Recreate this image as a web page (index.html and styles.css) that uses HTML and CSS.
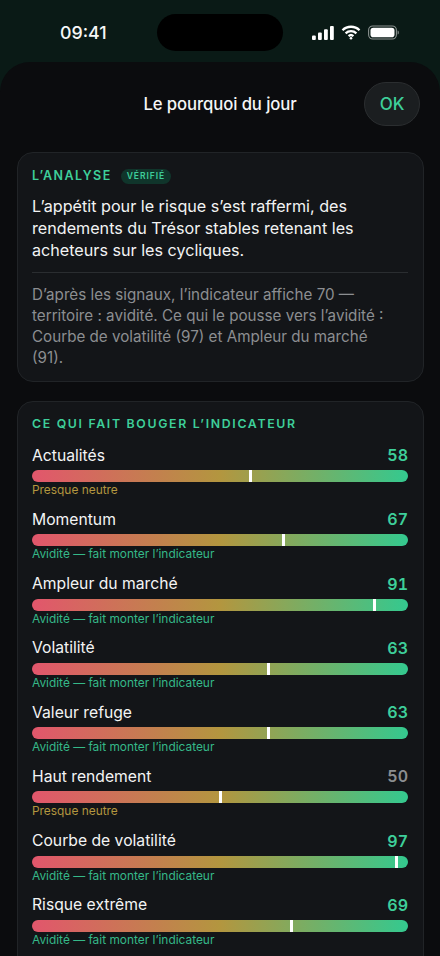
FILE: index.html
```html
<!DOCTYPE html>
<html lang="fr">
<head>
<meta charset="utf-8">
<title>Le pourquoi du jour</title>
<link rel="stylesheet" href="styles.css">
</head>
<body>
<div class="screen">
  <div class="status">
    <span class="time">09:41</span>
    <span class="island"></span>
    <span class="status-icons">
      <svg class="ic-signal" width="22" height="14" viewBox="0 0 22 14"><rect x="0" y="9.500" width="3.800" height="4.500" rx="1"/><rect x="6" y="6.500" width="3.800" height="7.500" rx="1"/><rect x="12" y="3.200" width="3.800" height="10.800" rx="1"/><rect x="18" y="0" width="3.800" height="14" rx="1"/></svg>
      <svg class="ic-wifi" width="20" height="15" viewBox="0 0 20 15"><path d="M1.500 5.200a12.200 12.200 0 0 1 17 0"/><path d="M4.600 8.300a7.800 7.800 0 0 1 10.800 0"/><path d="M7.600 11.200a3.500 3.500 0 0 1 4.800 0"/><circle cx="10" cy="13.200" r="1.300" class="dot"/></svg>
      <svg class="ic-batt" width="31" height="15" viewBox="0 0 31 15"><rect x="0.600" y="1" width="27.800" height="13" rx="4.200" class="shell"/><rect x="2.500" y="2.800" width="24" height="9.400" rx="2.800" class="fill"/><path d="M29.600 5.500c.9.300 1.200 1.100 1.200 2s-.3 1.700-1.200 2z" class="cap"/></svg>
    </span>
  </div>
  <main class="sheet">
    <header class="head">
      <h1 class="title">Le pourquoi du jour</h1>
      <button class="ok">OK</button>
    </header>
    <section class="card analysis">
      <div class="label-row">
        <h2 class="label">L’ANALYSE</h2>
        <span class="badge">VÉRIFIÉ</span>
      </div>
      <p class="lead">L’appétit pour le risque s’est raffermi, des rendements du Trésor stables retenant les acheteurs sur les cycliques.</p>
      <hr class="rule">
      <p class="detail">D’après les signaux, l’indicateur affiche 70 — territoire : avidité. Ce qui le pousse vers l’avidité : Courbe de volatilité (97) et Ampleur du marché (91).</p>
    </section>
    <section class="card drivers">
      <h2 class="label wide">CE QUI FAIT BOUGER L’INDICATEUR</h2>
      <div class="row">
        <div class="row-top"><span class="name">Actualités</span><span class="val up">58</span></div>
        <div class="bar"><i class="mark" style="left:58%"></i></div>
        <div class="note neutral">Presque neutre</div>
      </div>
      <div class="row">
        <div class="row-top"><span class="name">Momentum</span><span class="val up">67</span></div>
        <div class="bar"><i class="mark" style="left:67%"></i></div>
        <div class="note up">Avidité — fait monter l’indicateur</div>
      </div>
      <div class="row">
        <div class="row-top"><span class="name">Ampleur du marché</span><span class="val up">91</span></div>
        <div class="bar"><i class="mark" style="left:91%"></i></div>
        <div class="note up">Avidité — fait monter l’indicateur</div>
      </div>
      <div class="row">
        <div class="row-top"><span class="name">Volatilité</span><span class="val up">63</span></div>
        <div class="bar"><i class="mark" style="left:63%"></i></div>
        <div class="note up">Avidité — fait monter l’indicateur</div>
      </div>
      <div class="row">
        <div class="row-top"><span class="name">Valeur refuge</span><span class="val up">63</span></div>
        <div class="bar"><i class="mark" style="left:63%"></i></div>
        <div class="note up">Avidité — fait monter l’indicateur</div>
      </div>
      <div class="row">
        <div class="row-top"><span class="name">Haut rendement</span><span class="val flat">50</span></div>
        <div class="bar"><i class="mark" style="left:50%"></i></div>
        <div class="note neutral">Presque neutre</div>
      </div>
      <div class="row">
        <div class="row-top"><span class="name">Courbe de volatilité</span><span class="val up">97</span></div>
        <div class="bar"><i class="mark" style="left:97%"></i></div>
        <div class="note up">Avidité — fait monter l’indicateur</div>
      </div>
      <div class="row">
        <div class="row-top"><span class="name">Risque extrême</span><span class="val up">69</span></div>
        <div class="bar"><i class="mark" style="left:69%"></i></div>
        <div class="note up">Avidité — fait monter l’indicateur</div>
      </div>
    </section>
  </main>
</div>
</body>
</html>
```
FILE: styles.css
```css
* { box-sizing: border-box; }
html, body { margin: 0; padding: 0; height: 956px; overflow: hidden; background: #0a1c17; }
body { font-family: Inter, "Noto Sans", sans-serif; color: #f4f5f5; }
.screen { width: 440px; height: 956px; overflow: hidden; display: flex; flex-direction: column; background: #0a1a16; }
.status { height: 62px; flex: none; display: flex; align-items: flex-start; padding: 14px 41px 0 60px; }
.time { font-size: 17.800px; font-weight: 500; line-height: 22px; margin-top: 8px; width: 48px; color: #f6f7f7; }
.island { width: 126px; height: 37px; border-radius: 19px; background: #000; margin-left: 49px; }
.status-icons { display: flex; align-items: center; gap: 7px; height: 37px; margin-left: 29px; }
.status-icons svg { display: block; }
.ic-signal rect { fill: #fff; }
.ic-wifi path { fill: none; stroke: #fff; stroke-width: 2.300; }
.ic-wifi .dot { fill: #fff; }
.ic-batt .shell { fill: none; stroke: #8b9290; stroke-width: 1.100; }
.ic-batt .fill { fill: #fff; }
.ic-batt .cap { fill: #8b9290; }
.sheet { flex: 1; background: #0b0c0e; border-radius: 30px 30px 0 0; padding: 20px 16.500px 0; display: flex; flex-direction: column; min-height: 0; }
.head { position: relative; height: 44px; flex: none; display: flex; align-items: center; justify-content: center; }
.title { margin: 0; font-size: 16.700px; font-weight: 500; line-height: 22px; letter-spacing: -0.100px; color: #f5f6f6; }
.ok { position: absolute; right: 3.500px; top: 0; width: 56px; height: 44px; border-radius: 22px; border: 1px solid #2b2e30; background: #1b1e20; color: #3ecf9a; font-family: inherit; font-size: 17px; font-weight: 500; padding: 0; }
.card { background: #131518; border: 1px solid #212427; border-radius: 16px; padding: 0 14.500px; flex: none; }
.analysis { margin-top: 26px; height: 230px; padding-top: 11px; }
.label-row { display: flex; align-items: center; gap: 9px; height: 24px; }
.label { margin: 0; font-size: 12.500px; font-weight: 600; color: #3ecf9a; letter-spacing: 1.450px; line-height: 24px; }
.label.wide { font-size: 12.300px; letter-spacing: 1.680px; line-height: 20px; padding-top: 12px; height: 32px; margin-bottom: 10px; }
.badge { font-size: 8.500px; font-weight: 600; letter-spacing: 0.950px; color: #3ecf9a; background: #10352b; border-radius: 8px; height: 15px; line-height: 15px; padding: 0 6px; }
.lead { margin: 7px 0 0; font-size: 16.150px; line-height: 22.100px; color: #f2f3f3; }
.rule { border: 0; height: 1px; background: #2a2d30; margin: 10.500px 0 11px; }
.detail { margin: 0; padding-right: 12px; font-size: 15.200px; line-height: 21px; color: #8c8e91; }
.drivers { margin-top: 19px; padding-bottom: 40px; }
.row { height: 64.250px; }
.row-top { display: flex; justify-content: space-between; align-items: center; height: 22px; }
.name { font-size: 15.700px; font-weight: 400; color: #f3f4f4; }
.val { font-size: 16px; font-weight: 600; font-variant-numeric: tabular-nums; }
.val.up { color: #3ecf9a; }
.val.flat { color: #8b8e90; }
.bar { position: relative; height: 12px; margin-top: 4px; border-radius: 6px; background: linear-gradient(90deg, #e2566c 0%, #b3963f 50%, #34c98f 100%); }
.mark { position: absolute; top: 0; bottom: 0; width: 3px; margin-left: -1.500px; background: #fff; }
.note { font-size: 11.900px; line-height: 16px; }
.note.up { color: #35b888; }
.note.neutral { color: #b3963f; }
```
